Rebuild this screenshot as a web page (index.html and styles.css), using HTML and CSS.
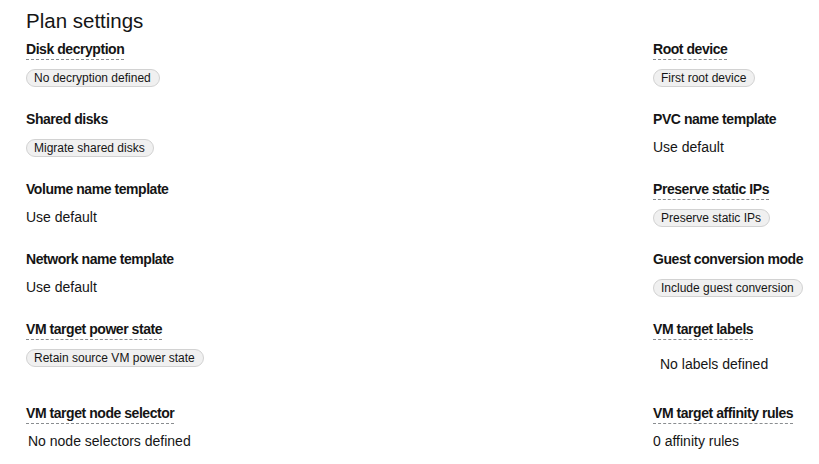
FILE: index.html
```html
<!DOCTYPE html>
<html lang="en">
<head>
    <meta charset="UTF-8">
    <meta name="viewport" content="width=device-width, initial-scale=1.0">
    <title>Plan settings</title>
    <link rel="stylesheet" href="styles.css">
</head>
<body>

<h2 class="title">Plan settings</h2>

<dl class="settings">
    <div class="item">
        <dt><span class="help">Disk decryption</span></dt>
        <dd><span class="label">No decryption defined</span></dd>
    </div>
    <div class="item">
        <dt><span class="help">Root device</span></dt>
        <dd><span class="label">First root device</span></dd>
    </div>

    <div class="item">
        <dt>Shared disks</dt>
        <dd><span class="label">Migrate shared disks</span></dd>
    </div>
    <div class="item">
        <dt>PVC name template</dt>
        <dd>Use default</dd>
    </div>

    <div class="item">
        <dt>Volume name template</dt>
        <dd>Use default</dd>
    </div>
    <div class="item">
        <dt><span class="help">Preserve static IPs</span></dt>
        <dd><span class="label">Preserve static IPs</span></dd>
    </div>

    <div class="item">
        <dt>Network name template</dt>
        <dd>Use default</dd>
    </div>
    <div class="item">
        <dt>Guest conversion mode</dt>
        <dd><span class="label">Include guest conversion</span></dd>
    </div>

    <div class="item">
        <dt><span class="help">VM target power state</span></dt>
        <dd><span class="label">Retain source VM power state</span></dd>
    </div>
    <div class="item">
        <dt><span class="help">VM target labels</span></dt>
        <dd><div class="label-group">No labels defined</div></dd>
    </div>

    <div class="item">
        <dt><span class="help">VM target node selector</span></dt>
        <dd><div class="selectors">No node selectors defined</div></dd>
    </div>
    <div class="item">
        <dt><span class="help">VM target affinity rules</span></dt>
        <dd>0 affinity rules</dd>
    </div>
</dl>

</body>
</html>
```

FILE: styles.css
```css
body {
    font-family: "Liberation Sans", Arial, sans-serif;
    color: #151515;
    margin: 0;
    padding: 7px 0 0 26px;
    background: #fff;
}

.title {
    font-size: 20.5px;
    font-weight: normal;
    line-height: 28px;
    margin: 0 0 4px 0;
}

.settings {
    display: grid;
    grid-template-columns: 1fr 166px;
    row-gap: 21px;
    margin: 0;
}

.item {
    display: flex;
    flex-direction: column;
    gap: 7px;
}

dt {
    font-size: 14px;
    font-weight: bold;
    line-height: 21px;
    letter-spacing: -0.45px;
}

dd {
    margin: 0;
    font-size: 14px;
    line-height: 21px;
}

.help {
    display: inline-block;
    line-height: 20px;
    border-bottom: 1px dashed #8a8d90;
}

.label {
    display: inline-block;
    font-size: 12px;
    line-height: 16px;
    padding: 0 8px 0 7px;
    background-color: #f0f0f0;
    border: 1px solid #d2d2d2;
    border-radius: 30px;
    vertical-align: middle;
}

.label-group {
    padding: 7px;
}

.selectors {
    padding-left: 2px;
}
```
